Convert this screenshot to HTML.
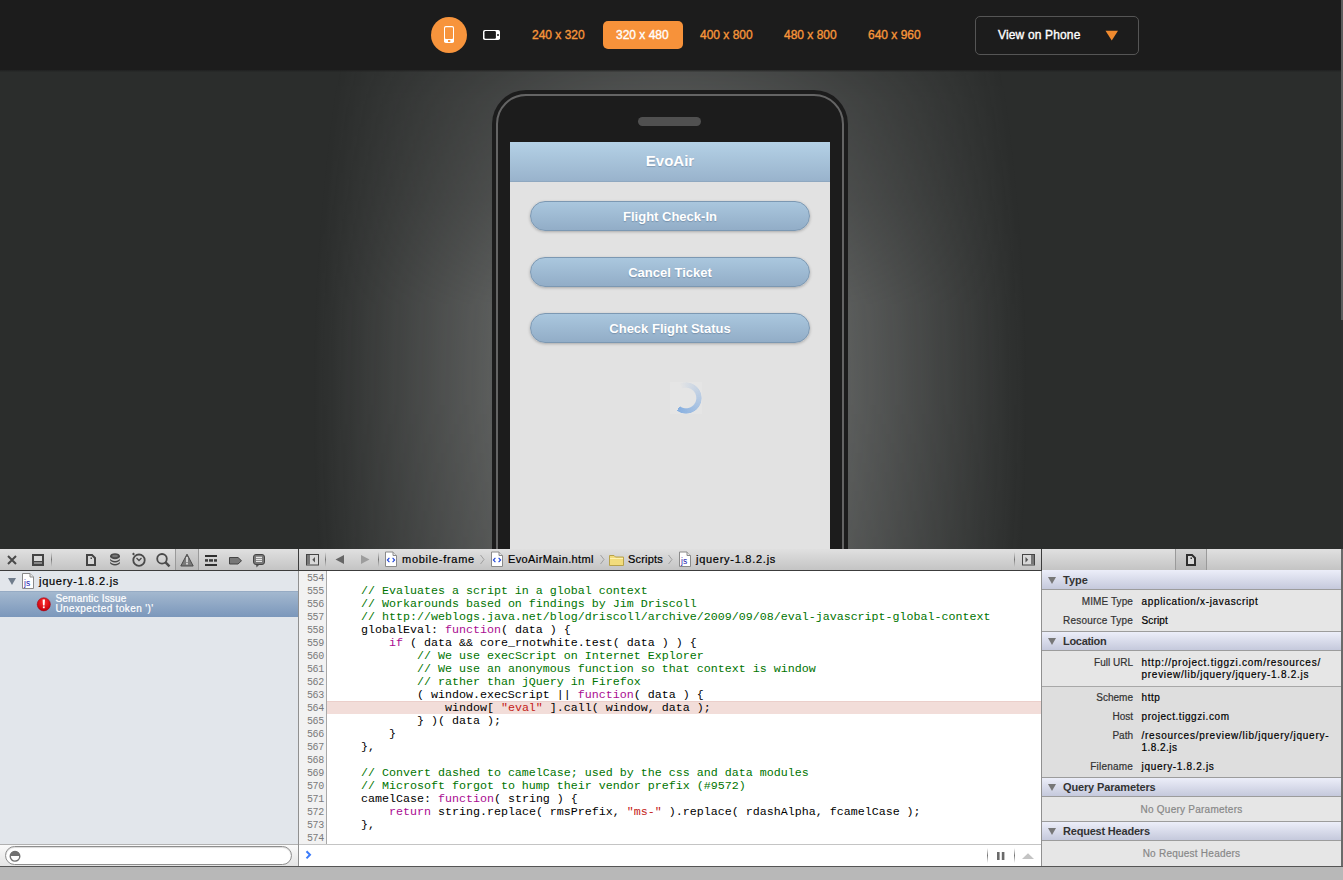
<!DOCTYPE html>
<html><head><meta charset="utf-8">
<style>
*{box-sizing:border-box;}
html,body{margin:0;padding:0;}
body{width:1343px;height:880px;overflow:hidden;position:relative;background:#2b2d2c;font-family:"Liberation Sans",sans-serif;}
.abs{position:absolute;}
.t{white-space:pre;-webkit-text-stroke:0.2px currentColor;}
#topbar{left:0;top:0;width:1343px;height:70px;background:#1c1c1c;}
#stage{left:0;top:70px;width:1343px;height:479px;background:#2b2d2c;overflow:hidden;}
#glow{left:0;top:0;width:1343px;height:479px;background:radial-gradient(357px 900px at 670px 330px, rgba(150,152,151,1) 0%, rgba(150,152,151,0) 100%);-webkit-mask-image:linear-gradient(to bottom, rgba(0,0,0,.45) 0px, rgba(0,0,0,.54) 30px, rgba(0,0,0,.68) 130px, rgba(0,0,0,.9) 235px, rgba(0,0,0,.9) 330px, rgba(0,0,0,.85) 455px, rgba(0,0,0,.84) 479px);}
#topshade{left:0;top:0;width:1343px;height:2px;background:linear-gradient(rgba(28,28,28,.7),rgba(28,28,28,.1));}
.size{color:#f7963a;font-size:12px;top:27.5px;-webkit-text-stroke:0.35px currentColor;}
#phone{left:492px;top:90px;width:356px;height:560px;background:#1c1c1c;border-radius:34px;}
#phoneline{left:496px;top:94px;width:348px;height:560px;border:2px solid #646464;border-radius:30px;}
#speaker{left:638px;top:117px;width:63px;height:9px;background:#505050;border-radius:5px;}
#screen{left:510px;top:142px;width:320px;height:407px;background:#e2e2e2;overflow:hidden;}
#hdr{left:0;top:0;width:320px;height:40px;background:linear-gradient(#b4d1e6,#99b3cc);border-bottom:1px solid #8fa8c0;color:#fff;font-weight:bold;font-size:15px;text-align:center;line-height:38px;text-shadow:0 1px 1px rgba(80,100,130,.4);}
.btn{left:20px;width:280px;height:30px;border-radius:15px;border:1px solid #7c98b2;background:linear-gradient(#aac7de,#92adc7);color:#fff;font-weight:bold;font-size:13px;text-align:center;line-height:29px;box-shadow:0 1px 3px rgba(0,0,0,.25);text-shadow:0 1px 1px rgba(60,80,110,.35);}
#dev{left:0;top:549px;width:1343px;height:331px;background:#b3b3b3;}
.tb{top:0;height:22px;background:linear-gradient(#e0e0e0,#c4c4c4);border-bottom:1px solid #3c3c3c;}
#leftp{left:0;top:22px;width:298px;height:273px;background:#e2e6eb;}
#code{left:327px;top:22px;width:714px;height:273px;background:#fff;}
#gutter{left:299px;top:22px;width:28px;height:273px;background:#f2f2f2;border-right:1px solid #a8a8a8;}
.ln{font-family:"Liberation Mono",monospace;font-size:10px;letter-spacing:-0.3px;color:#7a7a7a;text-align:right;width:25px;height:13px;line-height:15px;}
.cl{font-family:"Liberation Mono",monospace;font-size:11.6667px;height:13px;line-height:15px;white-space:pre;color:#000;left:6px;}
.c{color:#007400;} .k{color:#aa0d91;} .s{color:#c41a16;}
#rightp{left:1042px;top:22px;width:299px;height:295px;background:#e6e6e6;}
.sh{left:0;width:299px;height:20px;background:linear-gradient(#eceef9,#c5c9dc);border-top:1px solid #9c9c9c;border-bottom:1px solid #9c9c9c;}
.tri{width:0;height:0;border-left:4.5px solid transparent;border-right:4.5px solid transparent;border-top:7px solid #777;}
</style></head><body>

<div id="topbar" class="abs">
  <div class="abs" style="left:431px;top:17px;width:36px;height:36px;border-radius:50%;background:#f7943c;"></div>
  <svg class="abs" style="left:440px;top:22px;" width="20" height="25"><rect x="4" y="4" width="10" height="17" rx="1.8" fill="#fff"/><rect x="5" y="5.3" width="8" height="11.6" rx="1" fill="#f7943c"/><rect x="8" y="18" width="2.3" height="2" fill="#f7943c"/></svg>
  <svg class="abs" style="left:480px;top:27px;" width="24" height="16"><rect x="3" y="3" width="17" height="10" rx="1.8" fill="#fff"/><rect x="4.5" y="4" width="11.4" height="7.8" rx="1.2" fill="#1c1c1c"/><rect x="17" y="7" width="2" height="2" fill="#555"/></svg>
  <div class="abs size" style="left:532px;">240 x 320</div>
  <div class="abs" style="left:603px;top:21px;width:80px;height:28px;border-radius:5px;background:#f7923a;"></div>
  <div class="abs size" style="left:616px;color:#fff;">320 x 480</div>
  <div class="abs size" style="left:700px;">400 x 800</div>
  <div class="abs size" style="left:784px;">480 x 800</div>
  <div class="abs size" style="left:868px;">640 x 960</div>
  <div class="abs" style="left:975px;top:16px;width:164px;height:39px;border:1px solid #555;border-radius:5px;"></div>
  <div class="abs" style="left:998px;top:27.5px;color:#fff;font-size:12px;-webkit-text-stroke:0.35px #fff;letter-spacing:0.15px;">View on Phone</div>
  <svg class="abs" style="left:1100px;top:26px;" width="24" height="20"><path d="M5.5 4.8 H18 L11.75 14.5 Z" fill="#f08a2e"/></svg>
</div>

<div id="stage" class="abs">
  <div id="glow" class="abs"></div>
  <div id="topshade" class="abs"></div>
</div>

<div id="phone" class="abs"></div>
<div id="phoneline" class="abs"></div>
<div id="speaker" class="abs"></div>
<div id="screen" class="abs">
  <div id="hdr" class="abs">EvoAir</div>
  <div class="abs btn" style="top:59px;">Flight Check-In</div>
  <div class="abs btn" style="top:115px;">Cancel Ticket</div>
  <div class="abs btn" style="top:171px;">Check Flight Status</div>
  <div class="abs" style="left:160px;top:240px;width:32px;height:32px;background:#e5e5e5;"></div>
  <div class="abs" style="left:160px;top:240px;width:32px;height:32px;border-radius:50%;background:conic-gradient(from -25deg, rgba(134,175,224,0) 0deg, rgba(140,178,226,.5) 110deg, rgba(134,175,224,1) 241deg, rgba(0,0,0,0) 241deg);-webkit-mask:radial-gradient(circle closest-side at 50% 50%, transparent 9.8px, #000 10.8px, #000 15.2px, transparent 16px);"></div>
</div>

<div id="dev" class="abs">
<div class="abs tb" style="left:0;width:1343px;"></div>

<svg class="abs" style="left:0;top:0;" width="1343" height="22" viewBox="0 0 1343 22">
<defs>
<linearGradient id="selg" x1="0" y1="0" x2="0" y2="1"><stop offset="0" stop-color="#d2d2d2"/><stop offset="1" stop-color="#b9b9b9"/></linearGradient>
<linearGradient id="sepg" x1="0" y1="0" x2="0" y2="1"><stop offset="0" stop-color="#888" stop-opacity="0"/><stop offset=".5" stop-color="#777"/><stop offset="1" stop-color="#888" stop-opacity="0"/></linearGradient>
</defs>
<rect x="176" y="0" width="22" height="21" fill="url(#selg)"/>
<rect x="175" y="0" width="1" height="21" fill="#9a9a9a"/><rect x="198" y="0" width="1" height="21" fill="#9a9a9a"/>
<rect x="1176" y="0" width="30" height="21" fill="url(#selg)"/>
<rect x="1175" y="0" width="1" height="21" fill="#9a9a9a"/><rect x="1206" y="0" width="1" height="21" fill="#9a9a9a"/>
<rect x="51" y="3" width="1" height="15" fill="url(#sepg)"/>
<rect x="325" y="3" width="1" height="15" fill="url(#sepg)"/>
<rect x="378" y="3" width="1" height="15" fill="url(#sepg)"/>
<rect x="1014" y="3" width="1" height="15" fill="url(#sepg)"/>
<!-- X -->
<path d="M8 7 L16 15 M16 7 L8 15" stroke="#4a4a4a" stroke-width="2"/>
<!-- dock -->
<rect x="33" y="6" width="10" height="10" fill="#d8d8d8" stroke="#444" stroke-width="2"/>
<rect x="34" y="12" width="8" height="3" fill="#888"/><rect x="34" y="12" width="8" height="1" fill="#444"/>
<!-- doc -->
<path d="M87 6 H92 L95 9 V16 H87 Z" fill="#d8d8d8" stroke="#444" stroke-width="2" stroke-linejoin="miter"/>
<rect x="90.5" y="8.5" width="1.5" height="1.5" fill="#444"/>
<!-- database -->
<ellipse cx="115" cy="13.5" rx="5" ry="3" fill="#4a4a4a"/>
<ellipse cx="115" cy="12" rx="5" ry="3" fill="#d0d0d0"/>
<ellipse cx="115" cy="10.5" rx="5" ry="3" fill="#4a4a4a"/>
<ellipse cx="115" cy="9" rx="5" ry="3" fill="#d0d0d0"/>
<ellipse cx="115" cy="7.2" rx="5" ry="3" fill="#4a4a4a"/>
<ellipse cx="115" cy="7" rx="3" ry="1.3" fill="#777"/>
<!-- clock -->
<circle cx="139" cy="11.2" r="5.7" fill="none" stroke="#4a4a4a" stroke-width="1.8"/>
<path d="M136.5 9 L139 11.5 L141.5 9" fill="none" stroke="#4a4a4a" stroke-width="1.3"/>
<rect x="132.5" y="4" width="2" height="2" fill="#4a4a4a" transform="rotate(45 133.5 5)"/>
<!-- search -->
<circle cx="162" cy="9.8" r="4.8" fill="none" stroke="#4a4a4a" stroke-width="1.8"/>
<path d="M165.3 13.2 L169.5 17.4" stroke="#4a4a4a" stroke-width="2.4"/>
<!-- warning -->
<path d="M187 5.2 L193.2 17 H180.8 Z" fill="#7a7a7a" stroke="#4a4a4a" stroke-width="1" stroke-linejoin="round"/>
<rect x="186.2" y="8" width="1.6" height="5.3" fill="#e8e8e8"/><rect x="186.2" y="14" width="1.6" height="1.5" fill="#e8e8e8"/>
<!-- timeline -->
<rect x="205" y="6" width="12" height="2" fill="#2e2e2e"/>
<rect x="205" y="10.2" width="3" height="2.5" fill="#3a3a3a"/><rect x="209" y="10.2" width="4" height="2.5" fill="#3a3a3a"/><rect x="214" y="10.2" width="3" height="2.5" fill="#3a3a3a"/>
<rect x="205" y="15" width="12" height="2" fill="#2e2e2e"/>
<!-- tag -->
<path d="M229.5 8.5 H238 L241.5 11.75 L238 15 H229.5 Z" fill="#777" stroke="#444" stroke-width="1"/>
<!-- bubble -->
<path d="M256 15.5 L256.5 18.5 L259.5 15.5 Z" fill="#555"/>
<rect x="253.5" y="5.5" width="11" height="10" rx="2.5" fill="#777" stroke="#444" stroke-width="1"/>
<rect x="256" y="7.8" width="6" height="1" fill="#fff"/><rect x="256" y="9.8" width="6" height="1" fill="#fff"/><rect x="256" y="11.8" width="6" height="1" fill="#fff"/>
<!-- sidebar toggle left -->
<rect x="306.5" y="5.5" width="12" height="10.5" fill="#d8d8d8" stroke="#444" stroke-width="1"/>
<rect x="307" y="6" width="3" height="9.5" fill="#777"/>
<path d="M315 8 L312.3 10.75 L315 13.5 Z" fill="#555"/>
<!-- back/forward -->
<path d="M344 6 L335.5 10.5 L344 15 Z" fill="#666"/>
<path d="M361 6 L369.5 10.5 L361 15 Z" fill="#9d9d9d"/>
<!-- chevrons -->
<path d="M480.5 6 L484 10.5 L480.5 15" fill="none" stroke="#a0a0a0" stroke-width="1"/>
<path d="M600.5 6 L604 10.5 L600.5 15" fill="none" stroke="#a0a0a0" stroke-width="1"/>
<path d="M668.5 6 L672 10.5 L668.5 15" fill="none" stroke="#a0a0a0" stroke-width="1"/>
<!-- file icons -->
<g><path d="M385.5 3 H393 L396.5 6.5 V17.5 H385.5 Z" fill="#fff" stroke="#8a8a8a" stroke-width="1"/>
<path d="M393 3 V6.5 H396.5" fill="#e4e4e4" stroke="#8a8a8a" stroke-width="1"/>
<path d="M389.4 8.9 L387.4 11 L389.4 13.1 M392.6 8.9 L394.6 11 L392.6 13.1" fill="none" stroke="#1a3fd8" stroke-width="1.1"/></g>
<g transform="translate(106 0)"><path d="M385.5 3 H393 L396.5 6.5 V17.5 H385.5 Z" fill="#fff" stroke="#8a8a8a" stroke-width="1"/>
<path d="M393 3 V6.5 H396.5" fill="#e4e4e4" stroke="#8a8a8a" stroke-width="1"/>
<path d="M389.4 8.9 L387.4 11 L389.4 13.1 M392.6 8.9 L394.6 11 L392.6 13.1" fill="none" stroke="#1a3fd8" stroke-width="1.1"/></g>
<!-- folder -->
<path d="M609.5 6.5 H614 L615.5 8 H623.5 V16.5 H609.5 Z" fill="#f2dc7c" stroke="#b8a24a" stroke-width="1"/>
<rect x="610" y="9" width="13" height="1" fill="#fff2b0"/>
<!-- js icon -->
<path d="M679.5 3 H687 L690.5 6.5 V17.5 H679.5 Z" fill="#fff" stroke="#8a8a8a" stroke-width="1"/>
<path d="M687 3 V6.5 H690.5" fill="#e4e4e4" stroke="#8a8a8a" stroke-width="1"/>
<text x="681" y="15" font-family="Liberation Sans" font-size="8.5" fill="#2a1bb0">js</text>
<!-- right toggle -->
<rect x="1022.5" y="5.5" width="12" height="10.5" fill="#d8d8d8" stroke="#444" stroke-width="1"/>
<rect x="1031" y="6" width="3" height="9.5" fill="#777"/>
<path d="M1025.5 8 L1028.2 10.75 L1025.5 13.5 Z" fill="#555"/>
<!-- right doc -->
<path d="M1187 6 H1192 L1195 9 V16 H1187 Z" fill="#d8d8d8" stroke="#2e2e2e" stroke-width="2"/>
<rect x="1190.5" y="8.5" width="1.5" height="1.5" fill="#333"/>
</svg>
<div class="abs t" style="left:402px;top:4.29px;font-size:11px;line-height:13px;color:#000;letter-spacing:0.73px;">mobile-frame</div>
<div class="abs t" style="left:508px;top:4.29px;font-size:11px;line-height:13px;color:#000;letter-spacing:0.39px;">EvoAirMain.html</div>
<div class="abs t" style="left:628px;top:4.29px;font-size:11px;line-height:13px;color:#000;letter-spacing:0.2px;">Scripts</div>
<div class="abs t" style="left:696px;top:4.29px;font-size:11px;line-height:13px;color:#000;letter-spacing:0.73px;">jquery-1.8.2.js</div>
<div id="leftp" class="abs">
<div class="abs tri" style="left:8px;top:7px;border-top-color:#6f7c8b;"></div>
<svg class="abs" style="left:21px;top:2px;" width="14" height="17"><path d="M1.5 0.5 H9 L12.5 4 V15.5 H1.5 Z" fill="#fff" stroke="#8a8a8a"/><path d="M9 0.5 V4 H12.5" fill="#e4e4e4" stroke="#8a8a8a"/><text x="3" y="13" font-family="Liberation Sans" font-size="8.5" fill="#2a1bb0">js</text></svg>
<div class="abs t" style="left:39px;top:3.89px;font-size:11px;line-height:13px;color:#000;letter-spacing:0.73px;">jquery-1.8.2.js</div>
<div class="abs" style="left:0;top:20px;width:298px;height:26px;background:linear-gradient(#a3b8cf,#7b97bb);border-top:1px solid #96abc4;"></div>
<svg class="abs" style="left:36px;top:25px;" width="16" height="16"><defs><radialGradient id="rg" cx=".5" cy=".35" r=".6"><stop offset="0" stop-color="#ff3030"/><stop offset="1" stop-color="#c8000c"/></radialGradient></defs><circle cx="7.8" cy="8.3" r="6.6" fill="url(#rg)" stroke="#9a0010" stroke-width=".5"/><path d="M6.6 3.6 H9 L8.6 9.4 H7 Z" fill="#fff"/><rect x="6.9" y="10.4" width="1.8" height="1.8" fill="#fff"/></svg>
<div class="abs t" style="left:55.5px;top:21.53px;font-size:10px;line-height:12px;color:#fff;letter-spacing:0.19px;">Semantic Issue</div>
<div class="abs t" style="left:55.5px;top:32.14px;font-size:10px;line-height:12px;color:#fff;letter-spacing:0.375px;">Unexpected token ')'</div>
<div class="abs" style="left:0;top:273px;width:298px;height:1px;background:#b0b0b0;"></div>
<div class="abs" style="left:0;top:274px;width:298px;height:21px;background:linear-gradient(#fafafa,#e4e4e4);"></div>
<div class="abs" style="left:5px;top:275px;width:287px;height:19px;border-radius:9.5px;background:#fff;border:1px solid #8e8e8e;box-shadow:inset 0 1px 1px rgba(0,0,0,.15);"></div>
<svg class="abs" style="left:9px;top:279px;" width="13" height="13"><circle cx="6" cy="6.3" r="4.8" fill="#fff" stroke="#707070" stroke-width="1.4"/><path d="M1.2 6 A4.8 4.8 0 0 1 10.8 6 Z" fill="#707070"/></svg>
</div>
<div class="abs" style="left:298px;top:0;width:1px;height:22px;background:#3c3c3c;"></div><div class="abs" style="left:298px;top:22px;width:1px;height:295px;background:#909090;"></div>
<div id="gutter" class="abs">
<div class="abs ln" style="top:0px;left:0;">554</div>
<div class="abs ln" style="top:13px;left:0;">555</div>
<div class="abs ln" style="top:26px;left:0;">556</div>
<div class="abs ln" style="top:39px;left:0;">557</div>
<div class="abs ln" style="top:52px;left:0;">558</div>
<div class="abs ln" style="top:65px;left:0;">559</div>
<div class="abs ln" style="top:78px;left:0;">560</div>
<div class="abs ln" style="top:91px;left:0;">561</div>
<div class="abs ln" style="top:104px;left:0;">562</div>
<div class="abs ln" style="top:117px;left:0;">563</div>
<div class="abs ln" style="top:130px;left:0;">564</div>
<div class="abs ln" style="top:143px;left:0;">565</div>
<div class="abs ln" style="top:156px;left:0;">566</div>
<div class="abs ln" style="top:169px;left:0;">567</div>
<div class="abs ln" style="top:182px;left:0;">568</div>
<div class="abs ln" style="top:195px;left:0;">569</div>
<div class="abs ln" style="top:208px;left:0;">570</div>
<div class="abs ln" style="top:221px;left:0;">571</div>
<div class="abs ln" style="top:234px;left:0;">572</div>
<div class="abs ln" style="top:247px;left:0;">573</div>
<div class="abs ln" style="top:260px;left:0;">574</div>
</div>
<div id="code" class="abs">
<div class="abs" style="left:0;top:130px;width:714px;height:13px;background:#f2ddd9;border-top:1px solid #ebcfcb;"></div>
<div class="abs cl" style="top:0px;"></div>
<div class="abs cl" style="top:13px;">    <span class="c">// Evaluates a script in a global context</span></div>
<div class="abs cl" style="top:26px;">    <span class="c">// Workarounds based on findings by Jim Driscoll</span></div>
<div class="abs cl" style="top:39px;">    <span class="c">// http://weblogs.java.net/blog/driscoll/archive/2009/09/08/eval-javascript-global-context</span></div>
<div class="abs cl" style="top:52px;">    globalEval: <span class="k">function</span>( data ) {</div>
<div class="abs cl" style="top:65px;">        <span class="k">if</span> ( data &amp;&amp; core_rnotwhite.test( data ) ) {</div>
<div class="abs cl" style="top:78px;">            <span class="c">// We use execScript on Internet Explorer</span></div>
<div class="abs cl" style="top:91px;">            <span class="c">// We use an anonymous function so that context is window</span></div>
<div class="abs cl" style="top:104px;">            <span class="c">// rather than jQuery in Firefox</span></div>
<div class="abs cl" style="top:117px;">            ( window.execScript || <span class="k">function</span>( data ) {</div>
<div class="abs cl" style="top:130px;">                window[ <span class="s">"eval"</span> ].call( window, data );</div>
<div class="abs cl" style="top:143px;">            } )( data );</div>
<div class="abs cl" style="top:156px;">        }</div>
<div class="abs cl" style="top:169px;">    },</div>
<div class="abs cl" style="top:182px;"></div>
<div class="abs cl" style="top:195px;">    <span class="c">// Convert dashed to camelCase; used by the css and data modules</span></div>
<div class="abs cl" style="top:208px;">    <span class="c">// Microsoft forgot to hump their vendor prefix (#9572)</span></div>
<div class="abs cl" style="top:221px;">    camelCase: <span class="k">function</span>( string ) {</div>
<div class="abs cl" style="top:234px;">        <span class="k">return</span> string.replace( rmsPrefix, <span class="s">"ms-"</span> ).replace( rdashAlpha, fcamelCase );</div>
<div class="abs cl" style="top:247px;">    },</div>
<div class="abs cl" style="top:260px;"></div>
</div>
<div class="abs" style="left:299px;top:295px;width:742px;height:1px;background:#c4c4c4;"></div>
<div class="abs" style="left:299px;top:296px;width:742px;height:21px;background:#fff;"></div>
<svg class="abs" style="left:299px;top:296px;" width="742" height="21">
<path d="M7.5 6.2 L11 9.8 L7.5 13.4" fill="none" stroke="#3b7bfa" stroke-width="2"/>
<rect x="688" y="3" width="1" height="15" fill="url(#sepg)"/>
<rect x="698" y="7" width="2.6" height="8" fill="#6a6a6a"/><rect x="702.8" y="7" width="2.6" height="8" fill="#6a6a6a"/>
<rect x="715" y="3" width="1" height="15" fill="url(#sepg)"/>
<path d="M723 14 L729 8.2 L735 14 Z" fill="#c4c4c4"/>
</svg>
<div class="abs" style="left:1041px;top:0;width:1px;height:22px;background:#3c3c3c;"></div><div class="abs" style="left:1041px;top:22px;width:1px;height:295px;background:#909090;"></div>
<div id="rightp" class="abs">
<div class="abs sh" style="top:-1px;height:20px;border-top:none;"></div>
<div class="abs tri" style="left:6px;top:6px;"></div>
<div class="abs t" style="left:21px;top:3.29px;font-size:11px;line-height:13px;color:#333;font-weight:700;-webkit-text-stroke:0;">Type</div>
<div class="abs t" style="left:0px;width:91px;text-align:right;top:25.14px;font-size:10px;line-height:12px;color:#333;letter-spacing:0.1px;">MIME Type</div>
<div class="abs t" style="left:99.5px;top:25.14px;font-size:10px;line-height:12px;color:#000;letter-spacing:0.66px;">application/x-javascript</div>
<div class="abs t" style="left:0px;width:91px;text-align:right;top:44.14px;font-size:10px;line-height:12px;color:#333;letter-spacing:0.22px;">Resource Type</div>
<div class="abs t" style="left:99.5px;top:44.14px;font-size:10px;line-height:12px;color:#000;letter-spacing:0.15px;">Script</div>
<div class="abs sh" style="top:60px;height:20px;"></div>
<div class="abs tri" style="left:6px;top:67px;"></div>
<div class="abs t" style="left:21px;top:63.99px;font-size:11px;line-height:13px;color:#333;font-weight:700;-webkit-text-stroke:0;letter-spacing:-0.3px;">Location</div>
<div class="abs t" style="left:0px;width:91px;text-align:right;top:85.63px;font-size:10px;line-height:12px;color:#333;">Full URL</div>
<div class="abs t" style="left:99.5px;top:85.63px;font-size:10px;line-height:12px;color:#000;letter-spacing:0.755px;">http://project.tiggzi.com/resources/</div>
<div class="abs t" style="left:99.5px;top:97.53px;font-size:10px;line-height:12px;color:#000;letter-spacing:0.73px;">preview/lib/jquery/jquery-1.8.2.js</div>
<div class="abs" style="left:0;top:115px;width:299px;height:1px;background:#a8a8a8;"></div>
<div class="abs" style="left:0;top:116px;width:299px;height:91px;background:#dedede;"></div>
<div class="abs t" style="left:0px;width:91px;text-align:right;top:120.84px;font-size:10px;line-height:12px;color:#333;">Scheme</div>
<div class="abs t" style="left:99.5px;top:120.84px;font-size:10px;line-height:12px;color:#000;letter-spacing:0.57px;">http</div>
<div class="abs t" style="left:0px;width:91px;text-align:right;top:140.13px;font-size:10px;line-height:12px;color:#333;">Host</div>
<div class="abs t" style="left:99.5px;top:140.13px;font-size:10px;line-height:12px;color:#000;letter-spacing:0.57px;">project.tiggzi.com</div>
<div class="abs t" style="left:0px;width:91px;text-align:right;top:159.34px;font-size:10px;line-height:12px;color:#333;">Path</div>
<div class="abs t" style="left:99.5px;top:159.34px;font-size:10px;line-height:12px;color:#000;letter-spacing:0.75px;">/resources/preview/lib/jquery/jquery-</div>
<div class="abs t" style="left:99.5px;top:170.63px;font-size:10px;line-height:12px;color:#000;letter-spacing:0.475px;">1.8.2.js</div>
<div class="abs t" style="left:0px;width:91px;text-align:right;top:189.84px;font-size:10px;line-height:12px;color:#333;letter-spacing:0.2px;">Filename</div>
<div class="abs t" style="left:99.5px;top:189.84px;font-size:10px;line-height:12px;color:#000;letter-spacing:0.68px;">jquery-1.8.2.js</div>
<div class="abs sh" style="top:206px;height:20px;"></div>
<div class="abs tri" style="left:6px;top:213px;"></div>
<div class="abs t" style="left:21px;top:210.29px;font-size:11px;line-height:13px;color:#333;font-weight:700;-webkit-text-stroke:0;letter-spacing:-0.14px;">Query Parameters</div>
<div class="abs t" style="left:69.5px;width:160px;text-align:center;top:232.63px;font-size:10px;line-height:12px;color:#888;letter-spacing:0.25px;">No Query Parameters</div>
<div class="abs sh" style="top:250px;height:20px;"></div>
<div class="abs tri" style="left:6px;top:257px;"></div>
<div class="abs t" style="left:21px;top:254.29px;font-size:11px;line-height:13px;color:#333;font-weight:700;-webkit-text-stroke:0;letter-spacing:-0.2px;">Request Headers</div>
<div class="abs t" style="left:69.5px;width:160px;text-align:center;top:276.74px;font-size:10px;line-height:12px;color:#888;letter-spacing:0.24px;">No Request Headers</div>
</div>
<div class="abs" style="left:1341px;top:0;width:2px;height:331px;background:#6a6a6a;"></div>
<div class="abs" style="left:0;top:317px;width:1343px;height:1px;background:#555;"></div>
<div class="abs" style="left:0;top:318px;width:1343px;height:13px;background:#b8b8b8;"></div>
</div>

<div class="abs" style="left:1341px;top:0;width:2px;height:320px;background:#5c5c5c;"></div><div class="abs" style="left:1341px;top:320px;width:2px;height:229px;background:#2e2e2e;"></div>
</body></html>
